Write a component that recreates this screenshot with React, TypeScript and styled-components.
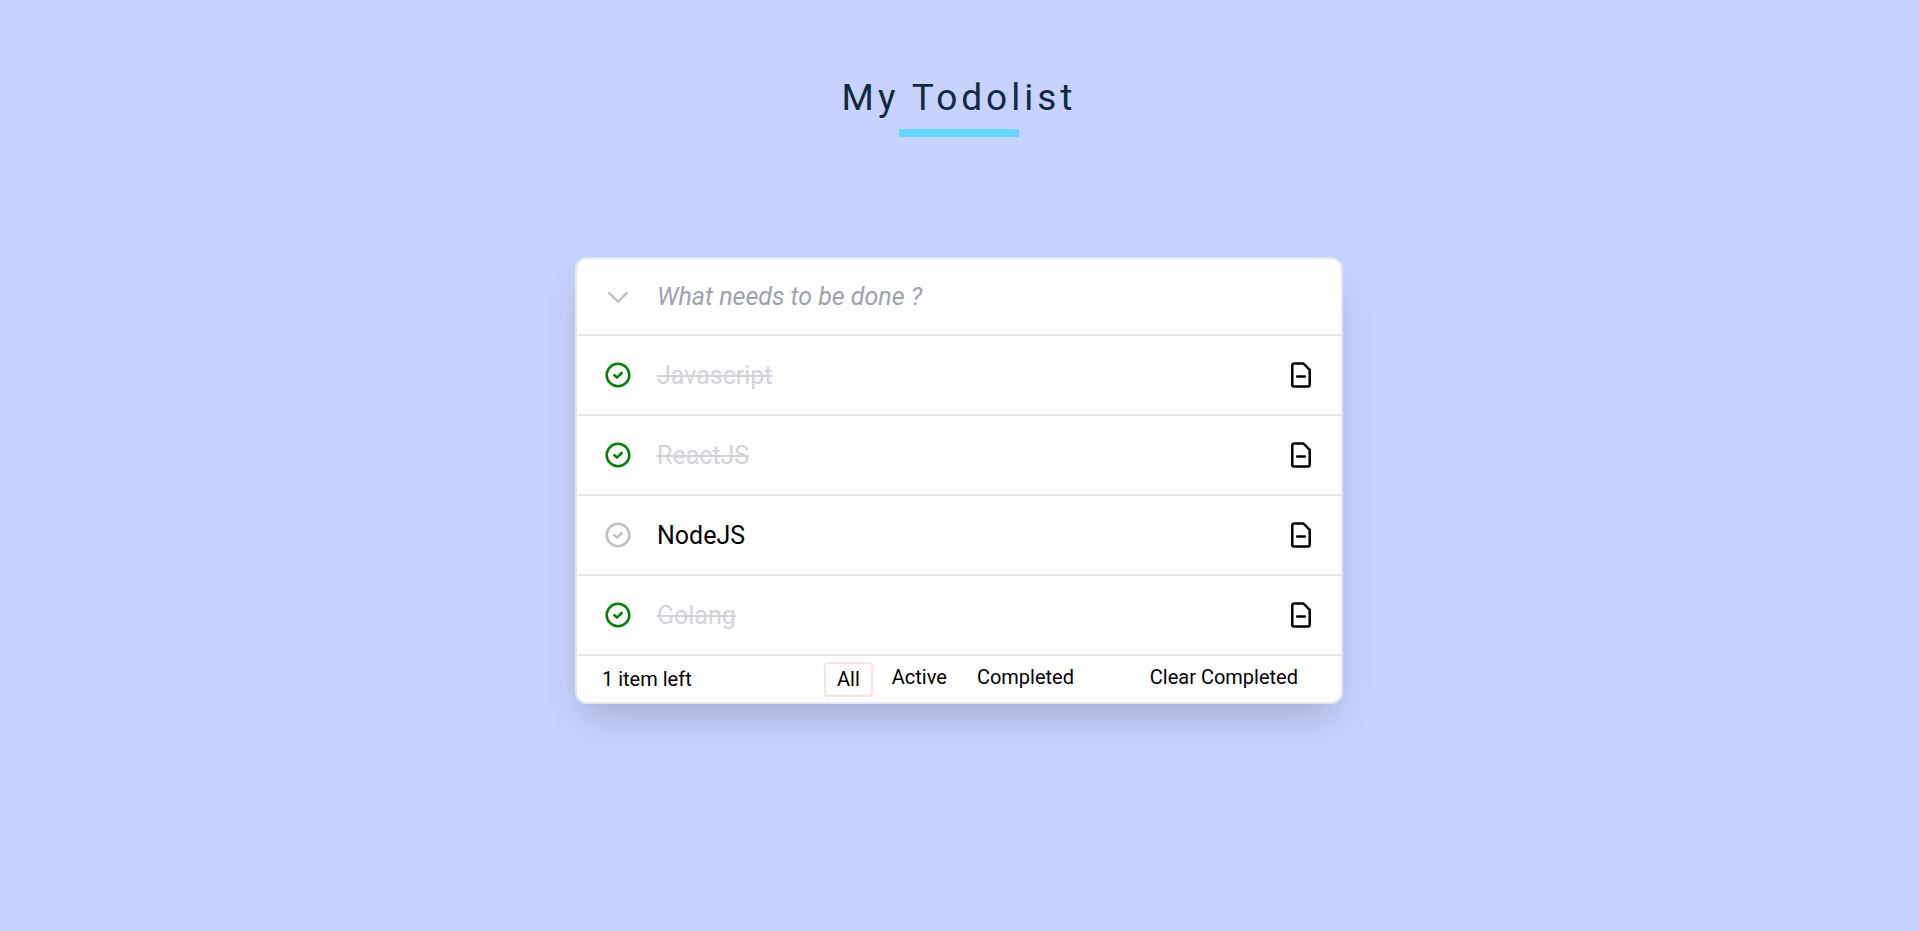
import React, { useState } from "react";
import styled, { createGlobalStyle } from "styled-components";

const GlobalStyle = createGlobalStyle`
  *, *::before, *::after { box-sizing: border-box; }
  body {
    margin: 0;
    background: #c7d2fe;
    color: #000;
    font-family: Roboto, "Liberation Sans", sans-serif;
  }
  button, input { font: inherit; color: inherit; }
`;

const Page = styled.main`
  display: flex;
  flex-direction: column;
  align-items: center;
  padding: 74px 17px 72px 16px;
`;

const Title = styled.h1`
  display: flex;
  flex-direction: column;
  align-items: center;
  margin: 0 0 120px;
  color: #102a42;
  font-size: 37px;
  font-weight: 400;
  line-height: 48px;
  letter-spacing: 4px;

  &::after {
    content: "";
    width: 120px;
    height: 8px;
    margin-top: 7px;
    background: #61dafb;
  }
`;

const Card = styled.section`
  width: 100%;
  max-width: 768px;
  border: 2px solid #e5e7eb;
  border-radius: 12px;
  background: #fff;
  box-shadow: 0 20px 40px -10px rgba(0, 0, 0, 0.2);
`;

const Entry = styled.form`
  display: flex;
  align-items: center;
  gap: 24px;
  height: 77px;
  padding: 0 26px;
  border-bottom: 2px solid #e5e7eb;
`;

const EntryInput = styled.input`
  flex: 1;
  min-width: 0;
  padding: 0;
  border: 0;
  outline: 0;
  background: transparent;
  font-size: 25px;
  line-height: 32px;

  &::placeholder {
    color: #9ca3af;
    font-style: italic;
    opacity: 1;
  }
`;

const List = styled.ul`
  margin: 0;
  padding: 0;
  list-style: none;
`;

const Item = styled.li`
  display: flex;
  align-items: center;
  gap: 24px;
  height: 80px;
  padding: 0 25px 0 26px;
  border-bottom: 2px solid #e5e7eb;
`;

const ItemText = styled.span<{ $done: boolean }>`
  flex: 1;
  padding-top: 2px;
  color: ${(p) => (p.$done ? "#d1d5db" : "#000")};
  font-size: 25px;
  line-height: 32px;
  text-decoration: ${(p) => (p.$done ? "line-through" : "none")};
`;

const IconButton = styled.button<{ $color: string }>`
  display: flex;
  padding: 0;
  border: 0;
  background: none;
  color: ${(p) => p.$color};
  cursor: pointer;
`;

const Footer = styled.footer`
  display: grid;
  grid-template-columns: 222px 1fr auto;
  align-items: start;
  padding: 6px 32px 5px 25px;
  font-size: 20px;
  line-height: 31px;
`;

const Count = styled.span`
  padding-top: 2px;
`;

const Filters = styled.nav`
  display: flex;
  align-items: flex-start;
  gap: 8px;
`;

const FooterButton = styled.button<{ $active?: boolean }>`
  padding: 0 11px;
  border: ${(p) => (p.$active ? "2px solid #fee2e2" : "0")};
  border-radius: 4px;
  background: none;
  line-height: 31px;
  white-space: nowrap;
  cursor: pointer;
`;

const Icon = ({ children }: { children: React.ReactNode }) => (
  <svg width="30" height="30" viewBox="0 0 30 30" fill="none" stroke="currentColor"
    strokeWidth="2.5" strokeLinecap="round" strokeLinejoin="round" aria-hidden="true">
    {children}
  </svg>
);

const ChevronIcon = () => (
  <Icon><path d="M6.3 11.2l8.7 8.4 8.7-8.4" /></Icon>
);

const CheckIcon = () => (
  <Icon>
    <circle cx="15" cy="15" r="11.3" />
    <path d="M11.4 15.2l2.6 2.5 4.7-4.7" />
  </Icon>
);

const FileIcon = () => (
  <Icon>
    <path d="M6.3 24.7V5.3a1.9 1.9 0 0 1 1.9-1.9h8.5a1.5 1.5 0 0 1 1.1.5l5.4 5.4a1.5 1.5 0 0 1 .5 1.1V24.7a1.7 1.7 0 0 1-1.7 1.7H8a1.7 1.7 0 0 1-1.7-1.7z" />
    <path d="M11.2 16.4h7.6" />
  </Icon>
);

const FILTERS = ["All", "Active", "Completed"];

export default function App() {
  const [filter, setFilter] = useState("All");
  const [draft, setDraft] = useState("");
  const [todos, setTodos] = useState([
    { text: "Javascript", done: true },
    { text: "ReactJS", done: true },
    { text: "NodeJS", done: false },
    { text: "Golang", done: true },
  ]);
  const left = todos.filter((t) => !t.done).length;
  const visible = todos.filter((t) => filter === "All" || t.done === (filter === "Completed"));

  const add = (e: React.FormEvent) => {
    e.preventDefault();
    if (!draft.trim()) return;
    setTodos([...todos, { text: draft.trim(), done: false }]);
    setDraft("");
  };
  const toggle = (todo: { text: string; done: boolean }) =>
    setTodos(todos.map((t) => (t === todo ? { ...t, done: !t.done } : t)));

  return (
    <>
      <GlobalStyle />
      <Page>
        <Title>My Todolist</Title>
        <Card>
          <Entry onSubmit={add}>
            <IconButton
              type="button"
              $color="#c0c0c0"
              aria-label="Complete all"
              onClick={() => setTodos(todos.map((t) => ({ ...t, done: true })))}
            >
              <ChevronIcon />
            </IconButton>
            <EntryInput
              aria-label="New item"
              placeholder="What needs to be done ?"
              value={draft}
              onChange={(e) => setDraft(e.target.value)}
            />
          </Entry>
          <List>
            {visible.map((todo) => (
              <Item key={todo.text}>
                <IconButton
                  type="button"
                  $color={todo.done ? "#008000" : "#c0c0c0"}
                  aria-label={`Toggle ${todo.text}`}
                  aria-pressed={todo.done}
                  onClick={() => toggle(todo)}
                >
                  <CheckIcon />
                </IconButton>
                <ItemText $done={todo.done}>{todo.text}</ItemText>
                <IconButton
                  type="button"
                  $color="#000"
                  aria-label={`Remove ${todo.text}`}
                  onClick={() => setTodos(todos.filter((t) => t !== todo))}
                >
                  <FileIcon />
                </IconButton>
              </Item>
            ))}
          </List>
          <Footer>
            <Count>{left} item left</Count>
            <Filters aria-label="Filter items">
              {FILTERS.map((name) => (
                <FooterButton
                  key={name}
                  type="button"
                  $active={filter === name}
                  onClick={() => setFilter(name)}
                >
                  {name}
                </FooterButton>
              ))}
            </Filters>
            <FooterButton type="button" onClick={() => setTodos(todos.filter((t) => !t.done))}>
              Clear Completed
            </FooterButton>
          </Footer>
        </Card>
      </Page>
    </>
  );
}
